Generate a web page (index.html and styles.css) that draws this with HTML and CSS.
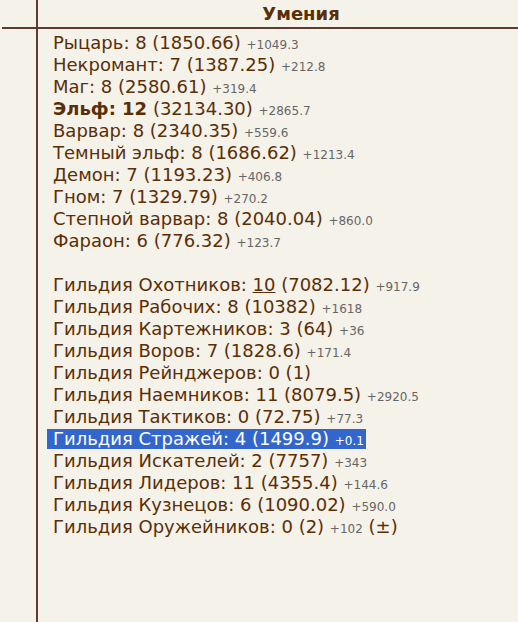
FILE: index.html
```html
<!DOCTYPE html>
<html lang="ru">
<head>
    <meta charset="UTF-8">
    <title>Умения</title>
    <link rel="stylesheet" href="styles.css">
</head>
<body>
    <div class="layout">
        <div class="side"></div>
        <div class="main">
            <div class="head">Умения</div>
            <div class="skills">
                <div>Рыцарь: 8 (1850.66) <span class="inc">+1049.3</span></div>
                <div>Некромант: 7 (1387.25) <span class="inc">+212.8</span></div>
                <div>Маг: 8 (2580.61) <span class="inc">+319.4</span></div>
                <div><b>Эльф: 12</b> (32134.30) <span class="inc">+2865.7</span></div>
                <div>Варвар: 8 (2340.35) <span class="inc">+559.6</span></div>
                <div>Темный эльф: 8 (1686.62) <span class="inc">+1213.4</span></div>
                <div>Демон: 7 (1193.23) <span class="inc">+406.8</span></div>
                <div>Гном: 7 (1329.79) <span class="inc">+270.2</span></div>
                <div>Степной варвар: 8 (2040.04) <span class="inc">+860.0</span></div>
                <div>Фараон: 6 (776.32) <span class="inc">+123.7</span></div>
                <div class="gap"></div>
                <div>Гильдия Охотников: <u>10</u> (7082.12) <span class="inc">+917.9</span></div>
                <div>Гильдия Рабочих: 8 (10382) <span class="inc">+1618</span></div>
                <div>Гильдия Картежников: 3 (64) <span class="inc">+36</span></div>
                <div>Гильдия Воров: 7 (1828.6) <span class="inc">+171.4</span></div>
                <div>Гильдия Рейнджеров: 0 (1)</div>
                <div>Гильдия Наемников: 11 (8079.5) <span class="inc">+2920.5</span></div>
                <div>Гильдия Тактиков: 0 (72.75) <span class="inc">+77.3</span></div>
                <div><span class="selected">Гильдия Стражей: 4 (1499.9) <span class="inc">+0.1</span></span></div>
                <div>Гильдия Искателей: 2 (7757) <span class="inc">+343</span></div>
                <div>Гильдия Лидеров: 11 (4355.4) <span class="inc">+144.6</span></div>
                <div>Гильдия Кузнецов: 6 (1090.02) <span class="inc">+590.0</span></div>
                <div>Гильдия Оружейников: 0 (2) <span class="inc">+102</span> (±)</div>
            </div>
        </div>
    </div>
</body>
</html>
```

FILE: styles.css
```css
html, body {
    height: 100%;
}

body {
    margin: 0;
    background-color: #f5f2ea;
    font-family: "DejaVu Sans", Verdana, sans-serif;
    color: #5a2e06;
    overflow: hidden;
}

.layout {
    display: flex;
    height: 100%;
}

.side {
    width: 36px;
    flex-shrink: 0;
    border-right: 2px solid #5e3b30;
}

.main {
    flex: 1;
}

.head {
    height: 27px;
    line-height: 28px;
    border-bottom: 2px solid #5e3b30;
    margin-left: -36px;
    padding-left: 82px;
    text-align: center;
    font-weight: bold;
    font-size: 18px;
    color: #5a2e06;
}

.skills {
    padding: 3px 0 0 15px;
    font-size: 18px;
    line-height: 22px;
}

.skills > div {
    height: 22px;
    white-space: nowrap;
}

.inc {
    font-size: 12px;
    line-height: 1;
    color: #666;
}

.selected {
    display: inline-block;
    line-height: 20px;
    margin-left: -6px;
    padding: 0 2px 0 6px;
    background-color: #3366cc;
    color: #fff;
    vertical-align: top;
    margin-top: 1px;
}

.selected .inc {
    color: #fff;
}
```
